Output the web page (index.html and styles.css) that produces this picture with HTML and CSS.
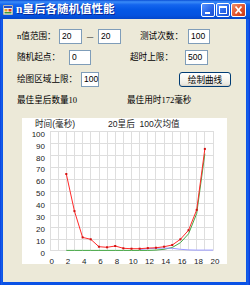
FILE: index.html
```html
<!DOCTYPE html>
<html lang="zh-CN">
<head>
  <meta charset="UTF-8">
  <title>n皇后各随机值性能</title>
  <link rel="stylesheet" href="styles.css">
</head>
<body>
<div class="window">
  <div class="titlebar">
    <svg class="app-icon" width="10" height="10" viewBox="0 0 10 10">
      <rect x="0" y="0" width="10" height="10" fill="#f4f4f4" stroke="#7a7a7a" stroke-width="1"/>
      <rect x="1" y="1" width="8" height="2" fill="#1c4fd0"/>
      <rect x="1.5" y="4" width="3" height="2.5" fill="#e8a020"/>
      <rect x="5.5" y="4" width="3" height="2.5" fill="#d83a1a"/>
      <rect x="1.5" y="7" width="7" height="1.5" fill="#3a9a3a"/>
    </svg>
    <span class="title">n皇后各随机值性能</span>
    <div class="caption-buttons">
      <span class="cap-btn">
        <svg width="12" height="12" viewBox="0 0 12 12"><rect x="3" y="8" width="5" height="2" fill="#fff"/></svg>
      </span>
      <span class="cap-btn">
        <svg width="12" height="12" viewBox="0 0 12 12"><rect x="2.5" y="2.5" width="7" height="7" fill="none" stroke="#fff"/><rect x="2" y="2" width="8" height="2" fill="#fff"/></svg>
      </span>
      <span class="cap-btn close">
        <svg width="13" height="12" viewBox="0 0 13 12"><path d="M3.5 2.5 L9.5 9.5 M9.5 2.5 L3.5 9.5" stroke="#fff" stroke-width="1.8"/></svg>
      </span>
    </div>
  </div>

  <div class="client">
    <div class="row row1">
      <span class="lbl w42">n值范围：</span>
      <span class="field w23">20</span>
      <span class="dash">—</span>
      <span class="field w23">20</span>
      <span class="lbl w48 gap19">测试次数：</span>
      <span class="field w22">100</span>
    </div>
    <div class="row row2">
      <span class="lbl w52">随机起点：</span>
      <span class="field w22">0</span>
      <span class="lbl w55 gap39">超时上限：</span>
      <span class="field w23">500</span>
    </div>
    <div class="row row3">
      <span class="lbl w64">绘图区域上限：</span>
      <span class="field w18">100</span>
      <button class="xp-button">绘制曲线</button>
    </div>
    <div class="row row4">
      <span class="lbl w110">最佳皇后数量10</span>
      <span class="lbl">最佳用时172毫秒</span>
    </div>

    <div class="chart">
      <svg width="205" height="146" viewBox="0 0 205 146">
        <!-- grid: one column per queen count, one row per 10ms -->
        <g class="grid">
          <path d="M28.5 13 V132.5 M36.5 13 V132.5 M44.5 13 V132.5 M52.5 13 V132.5 M60.5 13 V132.5 M68.5 13 V132.5 M77.5 13 V132.5 M85.5 13 V132.5 M93.5 13 V132.5 M101.5 13 V132.5 M109.5 13 V132.5 M117.5 13 V132.5 M125.5 13 V132.5 M133.5 13 V132.5 M142.5 13 V132.5 M150.5 13 V132.5 M158.5 13 V132.5 M166.5 13 V132.5 M174.5 13 V132.5 M182.5 13 V132.5 M191.5 13 V132.5"/>
          <path d="M28 13.5 H191.5 M28 25.5 H191.5 M28 37.5 H191.5 M28 49.5 H191.5 M28 61.5 H191.5 M28 73.5 H191.5 M28 85.5 H191.5 M28 97.5 H191.5 M28 109.5 H191.5 M28 121.5 H191.5 M28 132.5 H191.5"/>
        </g>

        <text class="caption" x="13" y="9.3">时间(毫秒)</text>
        <text class="caption keep" x="86" y="9.3">20皇后  100次均值</text>

        <g class="ylabels">
          <text x="23" y="19">100</text>
          <text x="23" y="30.6">90</text>
          <text x="23" y="42.5">80</text>
          <text x="23" y="54.4">70</text>
          <text x="23" y="66.3">60</text>
          <text x="23" y="78.3">50</text>
          <text x="23" y="90.2">40</text>
          <text x="23" y="102.1">30</text>
          <text x="23" y="114">20</text>
          <text x="23" y="126">10</text>
          <text x="23" y="137.9">0</text>
        </g>
        <g class="xlabels">
          <text x="29.7" y="145.5">0</text>
          <text x="46" y="145.5">2</text>
          <text x="62.3" y="145.5">4</text>
          <text x="78.6" y="145.5">6</text>
          <text x="94.9" y="145.5">8</text>
          <text x="111.2" y="145.5">10</text>
          <text x="127.5" y="145.5">12</text>
          <text x="143.8" y="145.5">14</text>
          <text x="160.1" y="145.5">16</text>
          <text x="176.4" y="145.5">18</text>
          <text x="193" y="145.5">20</text>
        </g>

        <polyline class="line-green" points="44.3,132.4 52.45,132.4 60.6,132.4 68.75,132.4 76.9,132.4 85.05,132.4 93.2,132.4 101.35,132.4 109.5,132.4 117.65,132.4 125.8,132.4 133.95,132.1 142.1,131.3 150.25,129.5 158.4,124.7 166.55,115.8 174.7,95.5 182.85,35.7"/>
        <polyline class="line-blue" points="117.65,131.5 125.8,130.7 133.95,130.3 142.1,130.1 150.25,130.3 158.4,131.3 166.55,131.9 174.7,132.1 182.85,132.1 191,132.1"/>
        <polyline class="line-red" points="44.3,56 52.45,93.1 60.6,119.4 68.75,121.3 76.9,128.7 85.05,129.3 93.2,128 101.35,130.3 109.5,130.7 117.65,130.7 125.8,130.1 133.95,129.75 142.1,128.7 150.25,127 158.4,121.3 166.55,112.2 174.7,91.9 182.85,30.9"/>
        <g class="marks">
          <rect x="43.3" y="55" width="2" height="2"/>
          <rect x="51.45" y="92.1" width="2" height="2"/>
          <rect x="59.6" y="118.4" width="2" height="2"/>
          <rect x="67.75" y="120.3" width="2" height="2"/>
          <rect x="75.9" y="127.7" width="2" height="2"/>
          <rect x="84.05" y="128.3" width="2" height="2"/>
          <rect x="92.2" y="127" width="2" height="2"/>
          <rect x="100.35" y="129.3" width="2" height="2"/>
          <rect x="108.5" y="129.7" width="2" height="2"/>
          <rect x="116.65" y="129.7" width="2" height="2"/>
          <rect x="124.8" y="129.1" width="2" height="2"/>
          <rect x="132.95" y="128.75" width="2" height="2"/>
          <rect x="141.1" y="127.7" width="2" height="2"/>
          <rect x="149.25" y="126" width="2" height="2"/>
          <rect x="157.4" y="120.3" width="2" height="2"/>
          <rect x="165.55" y="111.2" width="2" height="2"/>
          <rect x="173.7" y="90.9" width="2" height="2"/>
          <rect x="181.85" y="29.9" width="2" height="2"/>
        </g>
      </svg>
    </div>
  </div>
</div>
</body>
</html>
```

FILE: styles.css
```css
* {
  box-sizing: border-box;
}
html, body {
  margin: 0;
  padding: 0;
}
body {
  width: 250px;
  height: 285px;
  overflow: hidden;
  font-family: "Liberation Serif", "Noto Sans CJK SC", serif;
  font-size: 8.6px;
  color: #000;
}
.window {
  width: 250px;
  height: 285px;
  display: flex;
  flex-direction: column;
  background: linear-gradient(to right, #0831d9 0px, #1660ea 1px, #0a52e6 3px, #0a52e6 246px, #1660ea 248px, #0831d9 250px);
}
.titlebar {
  height: 19px;
  display: flex;
  align-items: center;
  padding: 0 4px 0 3px;
  background: linear-gradient(to bottom, #0a4ed6 0%, #3a8cf8 10%, #1465ee 25%, #0558e6 50%, #0553e0 80%, #0547cb 100%);
}
.app-icon {
  flex: none;
  margin-right: 3px;
}
.title {
  flex: 1;
  color: #fff;
  font-family: "Liberation Serif", "Noto Sans CJK SC", serif;
  font-weight: bold;
  font-size: 11.5px;
  line-height: 19px;
  white-space: nowrap;
  text-shadow: 1px 1px 0 #0a2a9a;
}
.caption-buttons {
  display: flex;
  gap: 1px;
  margin-top: 1px;
}
.cap-btn {
  width: 14px;
  height: 14px;
  display: flex;
  align-items: center;
  justify-content: center;
  border: 1px solid #fff;
  border-radius: 2px;
  background: linear-gradient(to bottom right, #5a95ff, #2563e8 60%, #1a4fd0);
}
.cap-btn.close {
  width: 15px;
  background: linear-gradient(to bottom right, #f0916c, #e2532c 55%, #c83a18);
}

.client {
  flex: 1;
  margin: 0 4px 3px 3px;
  background: #ece9d8;
  padding-top: 10px;
}
.row {
  display: flex;
  align-items: center;
  height: 15px;
  padding-left: 14px;
  line-height: 15px;
}
.row2 {
  margin-top: 6px;
}
.row3 {
  margin-top: 7px;
}
.row4 {
  margin-top: 7px;
  height: 12px;
  line-height: 12px;
}
.lbl {
  white-space: nowrap;
}
.w42 { width: 42px; }
.w48 { width: 48px; }
.w52 { width: 52px; }
.w55 { width: 55px; }
.w64 { width: 64px; }
.w110 { width: 110px; }
.gap19 { margin-left: 19px; }
.gap39 { margin-left: 39px; }

.field {
  height: 15px;
  padding: 0 2px;
  background: #fff;
  border: 1px solid #7f9db9;
  font-family: "Liberation Sans", sans-serif;
  font-size: 8.5px;
  line-height: 13px;
}
.field.w18 { width: 18px; }
.field.w22 { width: 22px; }
.field.w23 { width: 23px; }
.dash {
  width: 16px;
  text-align: center;
  font-family: "Noto Sans CJK SC", sans-serif;
  font-size: 8px;
}
.xp-button {
  width: 52px;
  height: 15px;
  margin-left: 80px;
  padding: 0;
  border: 1px solid #003c74;
  border-radius: 3px;
  background: linear-gradient(to bottom, #ffffff 0%, #f6f5f0 50%, #ebe9e1 85%, #d6d0c5 100%);
  font-family: "Noto Sans CJK SC", sans-serif;
  font-size: 8.6px;
  line-height: 13px;
  color: #000;
}

.chart {
  width: 205px;
  height: 146px;
  margin: 12px 0 0 19px;
  background: #fff;
}
.chart svg {
  display: block;
}
.grid path {
  fill: none;
  stroke: #dedede;
  stroke-width: 1;
}
.caption {
  font-family: "Liberation Sans", "Noto Sans CJK SC", sans-serif;
  font-size: 8.6px;
  fill: #222;
}
.caption.keep {
  white-space: pre;
}
.ylabels text,
.xlabels text {
  font-family: "Liberation Sans", sans-serif;
  font-size: 8px;
  fill: #222;
}
.ylabels text {
  text-anchor: end;
}
.xlabels text {
  text-anchor: middle;
}
.line-red,
.line-green,
.line-blue {
  fill: none;
  stroke-width: 1;
  stroke-linejoin: round;
}
.line-red {
  stroke: #ff2a2a;
}
.line-green {
  stroke: #45a845;
}
.line-blue {
  stroke: #9a9aff;
}
.marks rect {
  fill: #d01010;
}
```
